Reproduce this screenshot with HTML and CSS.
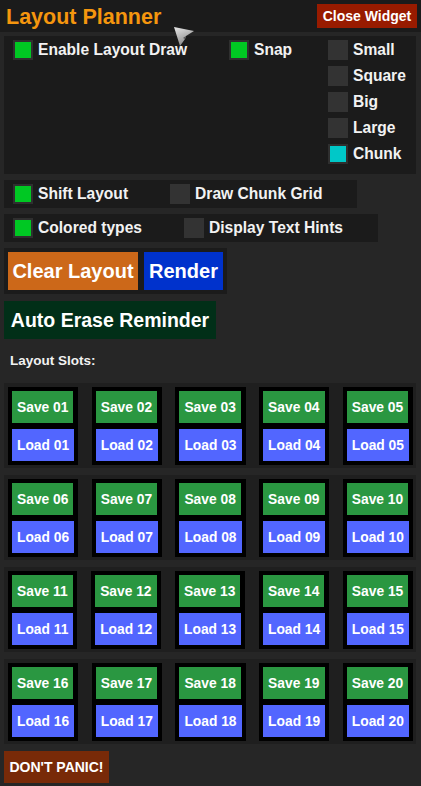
FILE: index.html
```html
<!DOCTYPE html>
<html>
<head>
<meta charset="utf-8">
<link rel="stylesheet" href="styles.css">
</head>
<body>
<header class="top">
  <h1 class="title">Layout Planner</h1>
  <button class="close">Close Widget</button>
</header>
<svg class="cursor" width="24" height="22" viewBox="0 0 24 22">
  <defs>
    <linearGradient id="cg" x1="0" y1="0" x2="0.4" y2="1">
      <stop offset="0" stop-color="#e8e8e8"/>
      <stop offset="1" stop-color="#8a8a8a"/>
    </linearGradient>
  </defs>
  <polygon points="1,1 21,5 13,10 12,13 7,20" fill="url(#cg)"/>
  <polygon points="10,12 13,10 12,13" fill="#555"/>
</svg>
<main class="main">
  <section class="panel options">
    <div class="col col1">
      <label class="check"><span class="box on"></span><span class="lbl">Enable Layout Draw</span></label>
    </div>
    <div class="col col2">
      <label class="check"><span class="box on"></span><span class="lbl">Snap</span></label>
    </div>
    <div class="col col3">
      <label class="check"><span class="box"></span><span class="lbl">Small</span></label>
      <label class="check"><span class="box"></span><span class="lbl">Square</span></label>
      <label class="check"><span class="box"></span><span class="lbl">Big</span></label>
      <label class="check"><span class="box"></span><span class="lbl">Large</span></label>
      <label class="check"><span class="box cyan"></span><span class="lbl">Chunk</span></label>
    </div>
  </section>

  <section class="panel row">
    <label class="check"><span class="box on"></span><span class="lbl">Shift Layout</span></label>
    <label class="check"><span class="box"></span><span class="lbl">Draw Chunk Grid</span></label>
  </section>

  <section class="panel row">
    <label class="check"><span class="box on"></span><span class="lbl">Colored types</span></label>
    <label class="check"><span class="box"></span><span class="lbl">Display Text Hints</span></label>
  </section>

  <section class="panel actions">
    <button class="big clear">Clear Layout</button>
    <button class="big render">Render</button>
  </section>

  <button class="erase">Auto Erase Reminder</button>

  <div class="slots-title">Layout Slots:</div>

  <div class="groups" id="groups"></div>

  <button class="panic">DON'T PANIC!</button>
</main>
<script src="app.js"></script>
</body>
</html>
```

FILE: app.js
```js
const groups = document.getElementById('groups');
for (let g = 0; g < 4; g++) {
  const grp = document.createElement('div');
  grp.className = 'group';
  for (let i = 1; i <= 5; i++) {
    const n = String(g * 5 + i).padStart(2, '0');
    const card = document.createElement('div');
    card.className = 'card';
    card.innerHTML = '<button class="slot save">Save ' + n + '</button><button class="slot load">Load ' + n + '</button>';
    grp.appendChild(card);
  }
  groups.appendChild(grp);
}
```

FILE: styles.css
```css
* { box-sizing: border-box; }
html, body { margin: 0; padding: 0; }
body {
  background: #262626;
  font-family: "Liberation Sans", Arial, sans-serif;
  font-weight: bold;
  color: #f2f2f2;
  width: 421px;
  height: 786px;
  overflow: hidden;
  position: relative;
}
button {
  font-family: inherit;
  font-weight: bold;
  border: none;
  color: #fff;
  margin: 0;
  cursor: pointer;
  white-space: nowrap;
}
.top {
  height: 32px;
  background: #1b1b1b;
  display: flex;
  align-items: center;
  justify-content: space-between;
  padding: 0 4px 0 6px;
}
.title {
  margin: 0;
  margin-top: 2px;
  font-size: 21.5px;
  color: #f5960e;
  font-weight: bold;
}
.close {
  background: #981b00;
  font-size: 14px;
  height: 24px;
  width: 100px;
  padding: 0;
}
.cursor {
  position: absolute;
  left: 173px;
  top: 26px;
}
.main {
  padding: 4px;
  display: flex;
  flex-direction: column;
  align-items: flex-start;
}
.panel { background: #1b1b1b; }
.options {
  width: 412px;
  height: 138px;
  display: flex;
  padding: 4px 4px 0 9px;
}
.col1 { width: 216px; }
.col2 { width: 99px; }
.col3 {
  display: flex;
  flex-direction: column;
  gap: 6px;
}
.check {
  display: flex;
  align-items: center;
  height: 20px;
  font-size: 15.6px;
}
.box {
  width: 20px;
  height: 20px;
  background: #333;
  flex: none;
  margin-right: 5px;
}
.box.on { background: #00c823; border: 2px solid #2f2f2f; }
.box.cyan { background: #00c8c8; border: 2px solid #2f2f2f; }
.lbl { white-space: nowrap; }
.row {
  margin-top: 6px;
  height: 28px;
  display: flex;
  align-items: center;
  padding: 0 35px 0 9px;
  gap: 42px;
}
.actions {
  margin-top: 6px;
  display: flex;
  gap: 6px;
  padding: 4px;
}
.big {
  height: 38px;
  font-size: 20px;
  padding: 0;
}
.clear { background: #cc6819; width: 130px; }
.render { background: #0032cc; width: 79px; }
.erase {
  margin-top: 7px;
  height: 38px;
  width: 212px;
  font-size: 19.5px;
  background: #012f18;
  padding: 0;
}
.slots-title {
  font-size: 13.5px;
  margin: 14px 0 0 6px;
  height: 30px;
}
.groups {
  display: flex;
  flex-direction: column;
  gap: 7px;
  width: 412px;
}
.group {
  background: #1f1f1f;
  padding: 4px 3px 3px 4px;
  display: flex;
  justify-content: space-between;
}
.card {
  background: #000;
  padding: 4px;
  display: flex;
  flex-direction: column;
  align-items: flex-start;
  gap: 6px;
}
.slot {
  height: 32px;
  font-size: 13.8px;
  padding: 0 5px;
}
.save { background: #2a9741; }
.load { background: #5266ff; }
.panic {
  margin-top: 7px;
  height: 32px;
  width: 105px;
  padding: 0;
  background: #782a08;
  font-size: 14px;
}
```
